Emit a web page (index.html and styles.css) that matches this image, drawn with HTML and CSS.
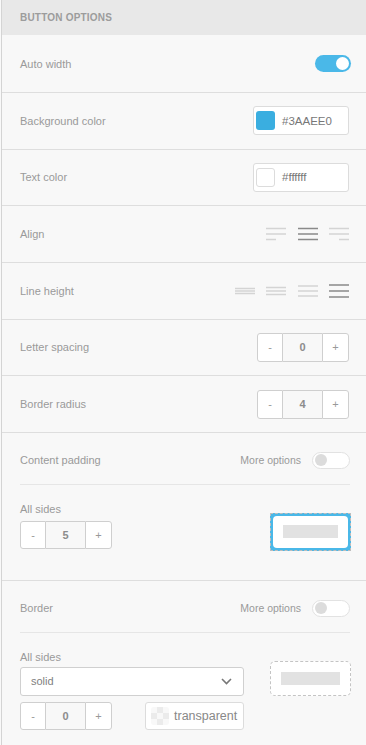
FILE: index.html
```html
<!DOCTYPE html>
<html lang="en">
<head>
    <meta charset="UTF-8">
    <meta name="viewport" content="width=device-width, initial-scale=1.0">
    <title>Button options</title>
    <link rel="stylesheet" href="styles.css">
</head>
<body>
    <div class="panel">
        <div class="panel-head">Button options</div>

        <div class="row first">
            <span class="label">Auto width</span>
            <span class="toggle on"><span class="knob"></span></span>
        </div>

        <div class="row">
            <span class="label">Background color</span>
            <div class="color-field">
                <span class="swatch blue"></span>
                <span class="color-value">#3AAEE0</span>
            </div>
        </div>

        <div class="row">
            <span class="label">Text color</span>
            <div class="color-field">
                <span class="swatch white"></span>
                <span class="color-value">#ffffff</span>
            </div>
        </div>

        <div class="row">
            <span class="label">Align</span>
            <div class="icon-group">
                <svg class="icon" width="20" height="14" viewBox="0 0 20 14">
                    <line x1="0" y1="1.5" x2="20" y2="1.5"/>
                    <line x1="0" y1="7" x2="20" y2="7"/>
                    <line x1="0" y1="12.5" x2="10" y2="12.5"/>
                </svg>
                <svg class="icon active" width="20" height="14" viewBox="0 0 20 14">
                    <line x1="0" y1="1.5" x2="20" y2="1.5"/>
                    <line x1="0" y1="7" x2="20" y2="7"/>
                    <line x1="0" y1="12.5" x2="20" y2="12.5"/>
                </svg>
                <svg class="icon" width="20" height="14" viewBox="0 0 20 14">
                    <line x1="0" y1="1.5" x2="20" y2="1.5"/>
                    <line x1="0" y1="7" x2="20" y2="7"/>
                    <line x1="10" y1="12.5" x2="20" y2="12.5"/>
                </svg>
            </div>
        </div>

        <div class="row">
            <span class="label">Line height</span>
            <div class="icon-group">
                <svg class="icon" width="20" height="14" viewBox="0 0 20 14">
                    <line x1="0" y1="4.5" x2="20" y2="4.5"/>
                    <line x1="0" y1="7" x2="20" y2="7"/>
                    <line x1="0" y1="9.5" x2="20" y2="9.5"/>
                </svg>
                <svg class="icon" width="20" height="14" viewBox="0 0 20 14">
                    <line x1="0" y1="3.5" x2="20" y2="3.5"/>
                    <line x1="0" y1="7" x2="20" y2="7"/>
                    <line x1="0" y1="10.5" x2="20" y2="10.5"/>
                </svg>
                <svg class="icon" width="20" height="14" viewBox="0 0 20 14">
                    <line x1="0" y1="2" x2="20" y2="2"/>
                    <line x1="0" y1="7" x2="20" y2="7"/>
                    <line x1="0" y1="12" x2="20" y2="12"/>
                </svg>
                <svg class="icon active" width="20" height="14" viewBox="0 0 20 14">
                    <line x1="0" y1="1" x2="20" y2="1"/>
                    <line x1="0" y1="7" x2="20" y2="7"/>
                    <line x1="0" y1="13" x2="20" y2="13"/>
                </svg>
            </div>
        </div>

        <div class="row">
            <span class="label">Letter spacing</span>
            <div class="stepper">
                <span class="step-btn">-</span>
                <span class="step-value">0</span>
                <span class="step-btn">+</span>
            </div>
        </div>

        <div class="row">
            <span class="label">Border radius</span>
            <div class="stepper">
                <span class="step-btn">-</span>
                <span class="step-value">4</span>
                <span class="step-btn">+</span>
            </div>
        </div>

        <div class="section">
            <div class="section-head">
                <span class="label">Content padding</span>
                <div class="more">
                    <span class="more-label">More options</span>
                    <span class="toggle"><span class="knob"></span></span>
                </div>
            </div>
            <div class="section-body">
                <div class="field-col">
                    <span class="label">All sides</span>
                    <div class="stepper small">
                        <span class="step-btn">-</span>
                        <span class="step-value">5</span>
                        <span class="step-btn">+</span>
                    </div>
                </div>
                <div class="preview selected">
                    <div class="preview-inner"><span class="preview-bar"></span></div>
                </div>
            </div>
        </div>

        <div class="section last">
            <div class="section-head">
                <span class="label">Border</span>
                <div class="more">
                    <span class="more-label">More options</span>
                    <span class="toggle"><span class="knob"></span></span>
                </div>
            </div>
            <div class="section-body">
                <div class="field-col wide">
                    <span class="label">All sides</span>
                    <div class="select">
                        <span>solid</span>
                        <svg width="11" height="7" viewBox="0 0 11 7">
                            <polyline points="1,1 5.5,5.5 10,1" fill="none" stroke="#777" stroke-width="1.6"/>
                        </svg>
                    </div>
                    <div class="field-line">
                        <div class="stepper small">
                            <span class="step-btn">-</span>
                            <span class="step-value">0</span>
                            <span class="step-btn">+</span>
                        </div>
                        <div class="transparent-btn">
                            <span class="checker"></span>
                            <span>transparent</span>
                        </div>
                    </div>
                </div>
                <div class="preview dashed">
                    <span class="preview-bar"></span>
                </div>
            </div>
        </div>
    </div>
</body>
</html>
```

FILE: styles.css
```css
body {
    margin: 0;
    padding-left: 1px;
    background-color: #f9f9f9;
    font-family: 'Liberation Sans', Arial, sans-serif;
    color: #999;
}
.panel {
    border-left: 1px solid #d4d4d4;
    min-height: 745px;
    background-color: #f8f8f8;
}
.panel-head {
    height: 35px;
    padding-left: 18px;
    display: flex;
    align-items: center;
    background-color: #e8e8e8;
    font-size: 10px;
    font-weight: bold;
    letter-spacing: 0.2px;
    text-transform: uppercase;
    color: #9c9c9c;
}
.label {
    font-size: 11px;
    color: #9a9a9a;
}
.row {
    height: 55.67px;
    box-sizing: content-box;
    padding: 0 16px 0 18px;
    display: flex;
    align-items: center;
    justify-content: space-between;
    border-bottom: 1px solid #dedede;
}
.row.first {
    height: 57px;
}
/* toggles */
.toggle {
    width: 32px;
    height: 15px;
    border: 1px solid #e2e2e2;
    border-radius: 9px;
    background-color: #fff;
    display: flex;
    align-items: center;
    padding: 0 2px;
}
.toggle .knob {
    width: 12px;
    height: 12px;
    border-radius: 50%;
    background-color: #dcdcdc;
}
.toggle.on {
    width: 34px;
    height: 17px;
    border: none;
    background-color: #4ab8e8;
    justify-content: flex-end;
    padding: 0 2px 0 0;
    margin-right: -1px;
}
.toggle.on .knob {
    width: 13px;
    height: 13px;
    background-color: #fff;
}
/* colour inputs */
.color-field {
    width: 96px;
    height: 29px;
    box-sizing: border-box;
    border: 1px solid #dcdcdc;
    border-radius: 3px;
    background-color: #fff;
    display: flex;
    align-items: center;
    padding-left: 2px;
    margin-right: 1px;
}
.swatch {
    width: 19px;
    height: 19px;
    box-sizing: border-box;
    border-radius: 3px;
    margin-right: 7px;
}
.swatch.blue {
    background-color: #3aaee0;
}
.swatch.white {
    background-color: #fff;
    border: 1px solid #dcdcdc;
}
.color-value {
    font-size: 11.5px;
    color: #777;
}
/* align / line height icons */
.icon-group {
    display: flex;
    gap: 11.5px;
    margin-right: 1px;
}
.icon line {
    stroke: #d4d4d4;
    stroke-width: 1.5;
}
.icon.active line {
    stroke: #8a8a8a;
}
/* steppers */
.stepper {
    display: flex;
    height: 29px;
    margin-right: 1px;
    font-size: 11px;
}
.step-btn {
    width: 24px;
    display: flex;
    align-items: center;
    justify-content: center;
    background-color: #fff;
    border: 1px solid #cfcfcf;
    color: #999;
}
.step-btn:first-child {
    border-radius: 3px 0 0 3px;
}
.step-btn:last-child {
    width: 25px;
    border-radius: 0 3px 3px 0;
}
.step-value {
    width: 39px;
    display: flex;
    align-items: center;
    justify-content: center;
    border-top: 1px solid #cfcfcf;
    border-bottom: 1px solid #cfcfcf;
    font-weight: bold;
    color: #8c8c8c;
}
.stepper.small {
    height: 28px;
}
/* sections with more options */
.section {
    padding: 0 16px 0 18px;
    border-bottom: 1px solid #dedede;
}
.section.last {
    border-bottom: none;
}
.section-head {
    height: 47px;
    padding-top: 4px;
    display: flex;
    align-items: center;
    justify-content: space-between;
    border-bottom: 1px solid #e6e6e6;
}
.more {
    display: flex;
    align-items: center;
    gap: 11px;
}
.more-label {
    font-size: 10.5px;
    color: #9a9a9a;
}
.section-body {
    display: flex;
    justify-content: space-between;
    align-items: flex-start;
    padding: 18px 0 29px;
}
.section.last .section-body {
    padding-bottom: 20px;
}
.field-col {
    display: flex;
    flex-direction: column;
    gap: 5px;
}
.field-col .label {
    line-height: 13px;
}
.field-col.wide {
    width: 224px;
    gap: 3px;
}
.field-line {
    display: flex;
    justify-content: space-between;
    align-items: center;
    margin-top: 3px;
}
.select {
    height: 29px;
    box-sizing: border-box;
    border: 1px solid #d0d0d0;
    border-radius: 3px;
    background-color: #fff;
    display: flex;
    align-items: center;
    justify-content: space-between;
    padding: 0 11px 0 10px;
    font-size: 11px;
    color: #808080;
}
.transparent-btn {
    width: 99px;
    height: 28px;
    box-sizing: border-box;
    border: 1px solid #dcdcdc;
    border-radius: 3px;
    background-color: #fff;
    display: flex;
    align-items: center;
    padding-left: 5px;
    gap: 5px;
    font-size: 12.5px;
    color: #888;
}
.checker {
    width: 18px;
    height: 18px;
    border-radius: 3px;
    background-color: #fff;
    background-image: conic-gradient(#ebebeb 25%, #f8f8f8 25% 50%, #ebebeb 50% 75%, #f8f8f8 75%);
    background-size: 12px 12px;
}
/* previews */
.preview {
    width: 81px;
    box-sizing: border-box;
    display: flex;
    align-items: center;
    justify-content: center;
    margin-top: 10px;
    margin-right: -1px;
}
.preview.selected {
    height: 38px;
    border: 1px dashed #bdbdbd;
    background-color: #4ab8e8;
    padding: 2px;
}
.preview-inner {
    width: 100%;
    height: 100%;
    border-radius: 4px;
    background-color: #fff;
    display: flex;
    align-items: center;
    justify-content: center;
}
.preview.selected .preview-bar {
    width: 55px;
}
.preview.dashed {
    height: 35px;
    border: 1px dashed #c4c4c4;
    border-radius: 5px;
    background-color: #fff;
}
.preview-bar {
    width: 59px;
    height: 13px;
    background-color: #e2e2e2;
}
```
